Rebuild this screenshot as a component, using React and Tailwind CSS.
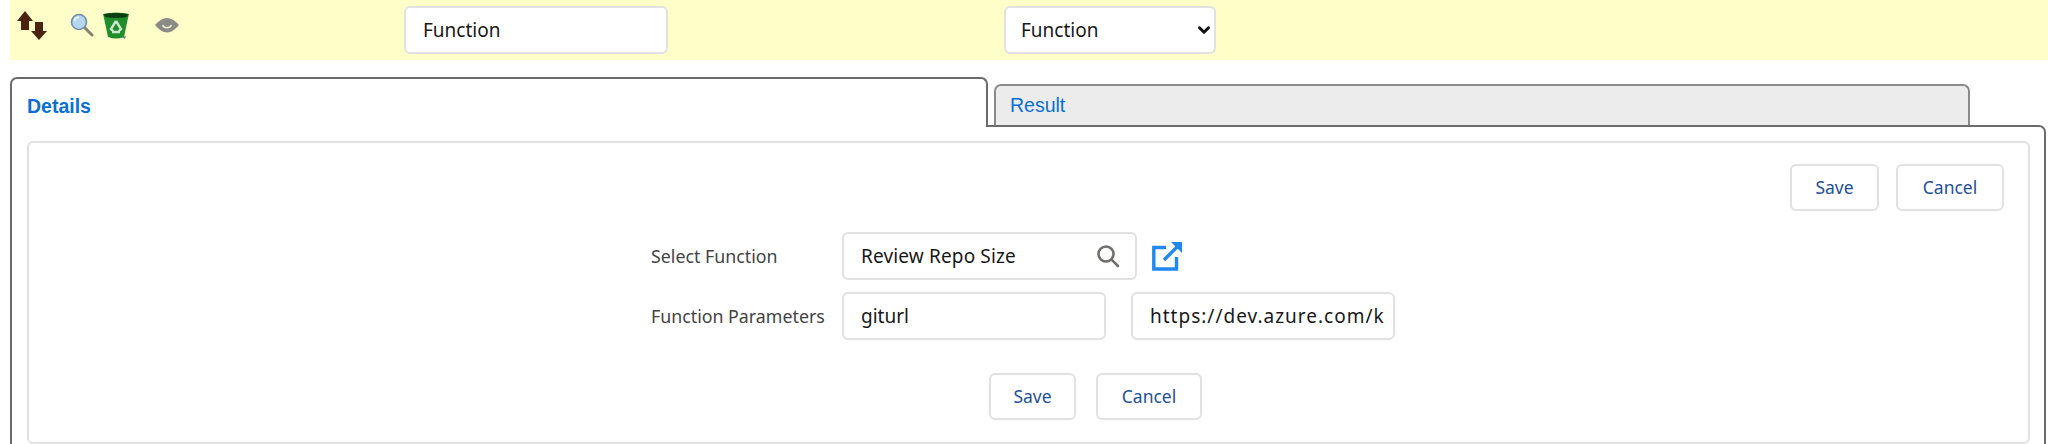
import React from 'react';
import { ChevronDown } from 'lucide-react';

const SANS = 'font-["Noto_Sans",sans-serif]';

const ActionButton = ({ width, children }) => (
    <button
        className={`h-[47px] ${width} rounded-[6px] border-2 border-[#e1e1e1] bg-white text-[17.5px] text-[#1f5199] ${SANS}`}
    >
        {children}
    </button>
);

const TextBox = ({ width, value, extra = '' }) => (
    <input
        readOnly
        value={value}
        className={`h-[48px] ${width} rounded-[6px] border-2 border-[#e1e1e1] bg-white pl-[17px] text-[19px] text-[#181818] outline-none ${SANS} ${extra}`}
    />
);

const SortIcon = () => (
    <svg width="30" height="30" viewBox="0 0 30 30" className="blur-[0.5px]">
        <path d="M8 0 L16 10 H12 V19 H4 V10 H0 Z" fill="#4a2410" />
        <path d="M18 11 H26 V20 H30 L22 29 L14 20 H18 Z" fill="#4a2410" />
    </svg>
);

const MagnifierIcon = () => (
    <svg width="24" height="24" viewBox="0 0 24 24" className="blur-[0.4px]">
        <line x1="14" y1="14" x2="22" y2="22" stroke="#8a8270" strokeWidth="3" strokeLinecap="round" />
        <circle cx="9" cy="9" r="7.5" fill="#b5d6ee" stroke="#6f8fa8" strokeWidth="1.6" />
        <path d="M4.5 8 A5 5 0 0 1 9 4" fill="none" stroke="#eef7fc" strokeWidth="1.6" />
    </svg>
);

const TrashIcon = () => (
    <svg width="26" height="27" viewBox="0 0 26 27" className="blur-[0.5px]">
        <path d="M0 2 Q13 -1 26 2 L25 6 L21 25 Q13 28 5 25 L1 6 Z" fill="#1f8f2b" />
        <path d="M1 2 Q13 0 25 2 L24 5 Q13 7 2 5 Z" fill="#0b3f12" />
        <path d="M13 9 L18 17 L16 19 M13 9 L8 17 L10 19 M9 20 H17" fill="none" stroke="#cfe6cf" strokeWidth="2.4" />
        <path d="M19 25 L23 24 L22 27 Z" fill="#777" />
    </svg>
);

const EyeIcon = () => (
    <svg width="24" height="17" viewBox="0 0 24 17" className="blur-[0.4px]">
        <path d="M0 8 Q12 -6 24 8 Q12 23 0 8 Z" fill="#8b8b86" />
        <path d="M7.5 8 A5 5 0 0 0 16.5 8" fill="none" stroke="#efeedd" strokeWidth="1.6" />
    </svg>
);

const SearchIcon = () => (
    <svg width="24" height="24" viewBox="0 0 24 24" fill="none" stroke="#6f6e6a" strokeWidth="2.6" strokeLinecap="round">
        <circle cx="10" cy="10" r="7.5" />
        <line x1="15.6" y1="15.6" x2="22" y2="22" />
    </svg>
);

const OpenIcon = () => (
    <svg width="30" height="29" viewBox="0 0 30 29" fill="none">
        <path d="M14 5.5 H1.8 V27 H24.5 V15" stroke="#2088ee" strokeWidth="3.4" />
        <path d="M12 18 L25 5" stroke="#2088ee" strokeWidth="3.4" />
        <path d="M19 0 H30 V11 Z" fill="#2088ee" />
    </svg>
);

export default function App() {
    return (
        <div className="h-[444px] w-full overflow-hidden bg-white">
            <div className="ml-[10px] flex h-[60px] bg-[#fffdc8]">
                <div className="flex w-[394px] items-start pl-[7px] pt-[11px]">
                    <SortIcon />
                    <span className="ml-[23px] mt-[2px]"><MagnifierIcon /></span>
                    <span className="ml-[9px] mt-[1px]"><TrashIcon /></span>
                    <span className="ml-[26px] mt-[6px]"><EyeIcon /></span>
                </div>
                <input
                    readOnly
                    value="Function"
                    className={`mt-[6px] h-[48px] w-[264px] rounded-[6px] border-2 border-[#e1e1e1] bg-white pl-[17px] text-[19px] text-[#181818] outline-none ${SANS}`}
                />
                <div className="relative ml-[336px] mt-[6px] h-[48px] w-[212px]">
                    <select className={`h-full w-full appearance-none rounded-[6px] border-2 border-[#e1e1e1] bg-white pl-[15px] text-[19px] text-[#181818] outline-none ${SANS}`}>
                        <option>Function</option>
                    </select>
                    <ChevronDown size={18} strokeWidth={4} className="pointer-events-none absolute right-[3px] top-[15px] text-[#111]" />
                </div>
            </div>

            <div className="ml-[10px] mt-[17px] flex items-end">
                <div className='relative z-10 -mb-[2px] flex h-[50px] w-[978px] items-center rounded-t-[7px] border-2 border-b-0 border-[#6b6b6b] bg-white pl-[15px] pt-[8px] font-["Liberation_Sans",sans-serif] text-[19.5px] font-bold text-[#0a6fd6]'>
                    Details
                </div>
                <div className='ml-[6px] flex h-[41px] w-[976px] items-center rounded-t-[7px] border-2 border-b-0 border-[#8a8a8a] bg-[#ececec] pl-[14px] font-["Liberation_Sans",sans-serif] text-[19.5px] text-[#0a6fd6]'>
                    Result
                </div>
            </div>

            <div className="ml-[10px] mr-[2px] h-[400px] rounded-tr-[7px] border-2 border-[#6b6b6b] bg-white pl-[15px] pr-[14px] pt-[14px]">
                <div className="h-[303px] rounded-[6px] border-2 border-[#e1e1e1] bg-white">
                    <div className="flex justify-end gap-[17px] pr-[24px] pt-[21px]">
                        <ActionButton width="w-[89px]">Save</ActionButton>
                        <ActionButton width="w-[108px]">Cancel</ActionButton>
                    </div>

                    <div className="ml-[622px] mt-[21px] flex items-center">
                        <span className={`w-[191px] text-[17.8px] text-[#444] ${SANS}`}>Select Function</span>
                        <div className="relative">
                            <TextBox width="w-[295px]" value="Review Repo Size" extra="tracking-[0.15px]" />
                            <span className="absolute right-[17px] top-[12px]"><SearchIcon /></span>
                        </div>
                        <span className="ml-[15px]"><OpenIcon /></span>
                    </div>

                    <div className="ml-[622px] mt-[12px] flex items-center">
                        <span className={`w-[191px] text-[17.8px] text-[#444] ${SANS}`}>Function Parameters</span>
                        <TextBox width="w-[264px]" value="giturl" />
                        <span className="ml-[25px]"><TextBox width="w-[264px]" value="https://dev.azure.com/k" extra="tracking-[1px]" /></span>
                    </div>

                    <div className="ml-[960px] mt-[33px] flex gap-[20px]">
                        <ActionButton width="w-[87px]">Save</ActionButton>
                        <ActionButton width="w-[106px]">Cancel</ActionButton>
                    </div>
                </div>
            </div>
        </div>
    );
}
